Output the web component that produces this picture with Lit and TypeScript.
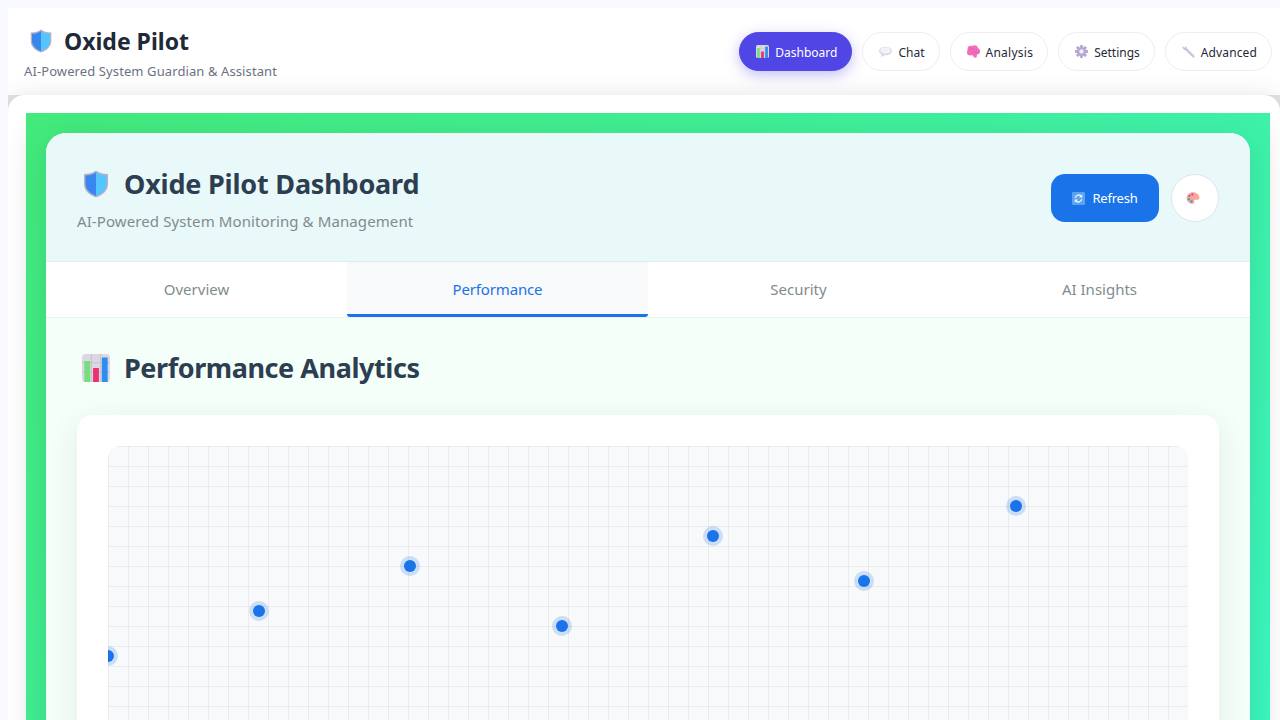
import { LitElement, html, css, svg } from "lit";
import { customElement } from "lit/decorators.js";

const shield = svg`<path d="M12 .4 C10 2.2 6 3.4 1.7 3.4 V12 C1.7 18 6.6 21.6 12 23.6 C17.4 21.6 22.3 18 22.3 12 V3.4 C18 3.4 14 2.2 12 .4 Z" fill="#b4b2c8"/><path d="M12 1.9 C10 3.6 6.4 4.7 3 4.8 V12 C3 17 7.4 20.4 12 22.2 Z" fill="#3a86ef"/><path d="M12 1.9 C14 3.6 17.6 4.7 21 4.8 V12 C21 17 16.6 20.4 12 22.2 Z" fill="#55c5ff"/>`;
const chart = svg`<rect x="0" y="0" width="24" height="24" rx="3" fill="#dcd8e2"/><path d="M0 7.5H24M0 15.5H24M8 0V24M16 0V24" stroke="#c4bfcc" stroke-width=".8"/><rect x="2" y="6" width="5" height="18" fill="#74e07c"/><rect x="9.5" y="12" width="5" height="12" fill="#ea3273"/><rect x="17" y="3" width="5" height="21" fill="#2f8df0"/>`;
const bubble = svg`<ellipse cx="12" cy="11" rx="12" ry="8" fill="#dcd5ea"/><ellipse cx="12" cy="10" rx="9.5" ry="6" fill="#f4f1f9"/><path d="M5 16 L4 22 L11 18 Z" fill="#d6cee6"/>`;
const brain = svg`<g fill="#f26cbc"><circle cx="7" cy="7.5" r="6"/><circle cx="14" cy="6.5" r="6"/><circle cx="18" cy="11.5" r="6"/><circle cx="6" cy="13.5" r="6"/><circle cx="13" cy="14" r="6"/><circle cx="15" cy="20" r="3.5"/></g><path d="M6 8 C9 6 11 9 14 7.5 M9 13.5 C13 11 15 15 19 12.5" stroke="#dc55a8" stroke-width="1.3" fill="none"/>`;
const gear = svg`<g fill="#b7a8d2"><circle cx="12" cy="12" r="8.5"/><rect x="9.4" y="0" width="5.2" height="24" rx="1"/><rect x="9.4" y="0" width="5.2" height="24" rx="1" transform="rotate(45 12 12)"/><rect x="9.4" y="0" width="5.2" height="24" rx="1" transform="rotate(90 12 12)"/><rect x="9.4" y="0" width="5.2" height="24" rx="1" transform="rotate(135 12 12)"/></g><circle cx="12" cy="12" r="4" fill="#f1eef7"/>`;
const wrench = svg`<path d="M7 7 L21 21" stroke="#d0c4e4" stroke-width="4.6" stroke-linecap="round"/><path d="M5 .8 L8.2 4 L10 9.5 L9.5 10.5 L4 9 L1 5.6 L1.2 2 L4.5 5 L6.2 3.6 Z" fill="#cdc0e2"/>`;
const refresh = svg`<rect width="24" height="24" rx="2" fill="#5ba2f1"/><path d="M6 11 A6.5 6.5 0 0 1 17.5 8" fill="none" stroke="#eef5fe" stroke-width="2.4"/><path d="M18 13 A6.5 6.5 0 0 1 6.5 16" fill="none" stroke="#eef5fe" stroke-width="2.4"/><path d="M19 4 V10 H13 Z M5 20 V14 H11 Z" fill="#eef5fe"/>`;
const palette = svg`<path d="M12 2 C5.5 2 1 6.5 1 12 C1 18 6 22 12 22 C14.5 22 15 20 14 18.5 C13 16.5 14.5 15 16.5 15 H19 C21.5 15 23 13.5 23 11 C23 6 18 2 12 2 Z" fill="#f5a99b"/><circle cx="11" cy="6" r="2" fill="#e83fa8"/><circle cx="6" cy="8.5" r="1.8" fill="#a04fd0"/><circle cx="5" cy="14" r="2" fill="#3fae8f"/><circle cx="9.5" cy="18" r="2" fill="#3a8ef0"/>`;

const ico = (p: unknown, s: number) =>
  html`<svg class="ico" width=${s} height=${s} viewBox="0 0 24 24" aria-hidden="true">${p}</svg>`;

const NAV = [
  { label: "Dashboard", icon: chart, cls: "active" },
  { label: "Chat", icon: bubble, cls: "" },
  { label: "Analysis", icon: brain, cls: "wide" },
  { label: "Settings", icon: gear, cls: "" },
  { label: "Advanced", icon: wrench, cls: "wider" },
];
const TABS = ["Overview", "Performance", "Security", "AI Insights"];
const POINTS = [
  [0, 70],
  [14, 55],
  [28, 40],
  [42, 60],
  [56, 30],
  [70, 45],
  [84.06, 20],
];

@customElement("app-root")
export class AppRoot extends LitElement {
  static styles = css`
    :host {
      display: block;
      height: 720px;
      overflow: hidden;
      background: #f8f9ff;
      font-family: "Noto Sans", "Open Sans", sans-serif;
      padding: 8px 0 0 8px;
      box-sizing: border-box;
    }
    .ico { display: block; flex: none; }
    .shell { background: #e4e4e8; overflow: hidden; height: 712px; }
    .top {
      height: 87px;
      display: flex;
      align-items: center;
      justify-content: space-between;
      padding: 0 8px 0 16px;
      box-sizing: border-box;
      background: #fff;
    }
    .brand-row { display: flex; align-items: center; height: 40px; margin-top: -2px; }
    .brand-row .ico { margin: 0 11px 0 5px; }
    .brand-row h1 { margin: 0; font-size: 23px; line-height: 32px; font-weight: 700; color: #1f2937; }
    .brand-sub { margin: 1px 0 0; font-size: 13px; line-height: 18px; color: #6b7280; letter-spacing: 0.1px; }
    nav { display: flex; gap: 10px; }
    .pill {
      display: flex;
      align-items: center;
      gap: 6px;
      height: 39px;
      box-sizing: border-box;
      padding: 1px 14px 0 16px;
      border: 1px solid #eeeef2;
      border-radius: 20px;
      background: #fff;
      color: #1f2937;
      font-size: 12px;
    }
    .pill .ico { margin-top: -1px; }
    .pill.wide { letter-spacing: 0.25px; }
    .pill.wider { letter-spacing: 0.12px; }
    .pill.active {
      background: #4f46e5;
      border-color: #4f46e5;
      color: #fff;
      box-shadow: 0 4px 14px rgba(79, 70, 229, 0.35);
    }
    main {
      padding: 18px 10px 0 18px;
      border-radius: 16px 16px 0 0;
      background: #fff;
      box-shadow: 0 0 24px rgba(0, 0, 0, 0.1);
      height: 700px;
      box-sizing: border-box;
    }
    .stage {
      background: linear-gradient(135deg, #43e97b 0%, #38f9d7 100%);
      box-shadow: 0 16px 24px rgba(0, 0, 0, 0.07);
      padding: 20px;
      height: 1300px;
      box-sizing: border-box;
    }
    .dash {
      border-radius: 20px;
      overflow: hidden;
      background: #f4fffa;
      box-shadow: 0 8px 32px rgba(0, 0, 0, 0.1);
    }
    .dash-head {
      height: 129px;
      box-sizing: border-box;
      padding: 2px 31px 0;
      display: flex;
      align-items: center;
      justify-content: space-between;
      background: #e9f8f9;
      border-bottom: 1px solid #dcecef;
    }
    .title-row { display: flex; align-items: center; }
    .title-row .ico { margin: 0 14px 0 5px; }
    h2 { margin: 0; font-size: 27px; line-height: 38px; font-weight: 700; color: #2c3e50; letter-spacing: -0.2px; }
    .body h2 { letter-spacing: -0.43px; }
    .dash-sub { margin: 8px 0 0; font-size: 15px; line-height: 20px; color: #7f8c8d; letter-spacing: 0.1px; }
    .actions { display: flex; align-items: center; gap: 12px; }
    .refresh {
      width: 108px;
      height: 48px;
      display: flex;
      align-items: center;
      justify-content: center;
      gap: 7px;
      background: #1a73e8;
      color: #fff;
      border-radius: 14px;
      font-size: 13px;
      letter-spacing: -0.2px;
    }
    .round {
      width: 48px;
      height: 48px;
      box-sizing: border-box;
      padding-right: 4px;
      border: 1px solid #dfe6e8;
      border-radius: 50%;
      background: #fff;
      display: flex;
      align-items: center;
      justify-content: center;
    }
    .tabs {
      display: grid;
      grid-template-columns: repeat(4, 1fr);
      background: #fff;
      border-bottom: 1px solid #e9f3ef;
    }
    .tab {
      height: 55px;
      box-sizing: border-box;
      padding-top: 2px;
      display: flex;
      align-items: center;
      justify-content: center;
      font-size: 15px;
      color: #7f8c8d;
      border-bottom: 3px solid transparent;
      border-radius: 0 0 3px 3px;
    }
    .tab.active { color: #1a73e8; background: #f8f9fa; border-bottom-color: #1a73e8; letter-spacing: -0.15px; }
    .body { padding: 31px; }
    .body .title-row { height: 38px; margin-bottom: 28px; }
    .chart-card {
      background: #fff;
      border-radius: 16px;
      padding: 31px;
      box-shadow: 0 8px 32px rgba(0, 0, 0, 0.08);
    }
    .chart {
      position: relative;
      height: 300px;
      overflow: hidden;
      border-radius: 12px;
      background-color: #f8f9fb;
      background-image:
        linear-gradient(rgba(0, 0, 0, 0.05) 1px, transparent 1px),
        linear-gradient(90deg, rgba(0, 0, 0, 0.05) 1px, transparent 1px);
      background-size: 20px 20px;
    }
    .dot {
      position: absolute;
      width: 12px;
      height: 12px;
      margin: -6px 0 0 -6px;
      border-radius: 50%;
      background: #1a73e8;
      box-shadow: 0 0 0 4px rgba(26, 115, 232, 0.2);
    }
  `;

  render() {
    return html`<div class="shell">
      <header class="top">
        <div>
          <div class="brand-row">${ico(shield, 24)}<h1>Oxide Pilot</h1></div>
          <p class="brand-sub">AI-Powered System Guardian &amp; Assistant</p>
        </div>
        <nav>
          ${NAV.map((n) => html`<div class="pill ${n.cls}">${ico(n.icon, 13)}<span>${n.label}</span></div>`)}
        </nav>
      </header>
      <main>
        <div class="stage">
          <div class="dash">
            <div class="dash-head">
              <div>
                <div class="title-row">${ico(shield, 28)}<h2>Oxide Pilot Dashboard</h2></div>
                <p class="dash-sub">AI-Powered System Monitoring &amp; Management</p>
              </div>
              <div class="actions">
                <div class="refresh">${ico(refresh, 13)}<span>Refresh</span></div>
                <div class="round">${ico(palette, 14)}</div>
              </div>
            </div>
            <div class="tabs">
              ${TABS.map((t) => html`<div class="tab ${t === "Performance" ? "active" : ""}">${t}</div>`)}
            </div>
            <div class="body">
              <div class="title-row">${ico(chart, 28)}<h2>Performance Analytics</h2></div>
              <div class="chart-card">
                <div class="chart">
                  ${POINTS.map(([x, y]) => html`<div class="dot" style="left:${x}%;top:${y}%"></div>`)}
                </div>
              </div>
            </div>
          </div>
        </div>
      </main>
    </div>`;
  }
}
